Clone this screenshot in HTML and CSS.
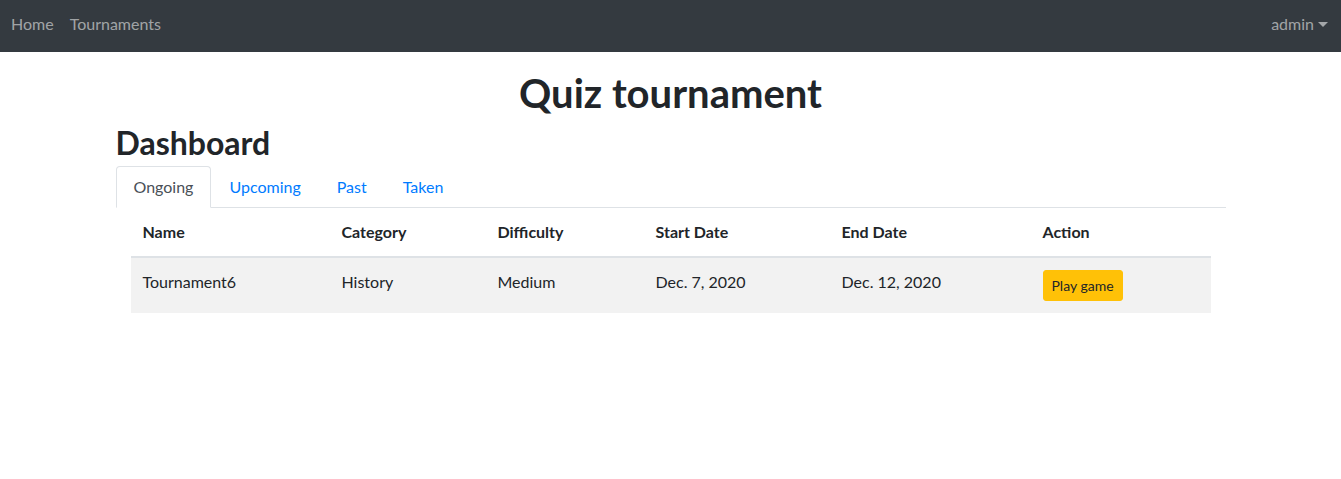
FILE: index.html
```html
<!DOCTYPE html>
<html>
<head>
<meta charset="utf-8">
<link rel="stylesheet" href="styles.css">
</head>
<body>
<nav class="navbar">
  <div class="nav-left">
    <a class="nav-link" href="#">Home</a>
    <a class="nav-link" href="#">Tournaments</a>
  </div>
  <div class="nav-right">
    <a class="nav-link dropdown" href="#">admin<span class="caret"></span></a>
  </div>
</nav>
<main class="container">
  <h1 class="title">Quiz tournament</h1>
  <h2 class="subtitle">Dashboard</h2>
  <ul class="tabs">
    <li><a class="tab active" href="#">Ongoing</a></li>
    <li><a class="tab" href="#">Upcoming</a></li>
    <li><a class="tab" href="#">Past</a></li>
    <li><a class="tab" href="#">Taken</a></li>
  </ul>
  <div class="tab-content">
    <table class="table">
      <thead>
        <tr>
          <th class="c1">Name</th>
          <th class="c2">Category</th>
          <th class="c3">Difficulty</th>
          <th class="c4">Start Date</th>
          <th class="c5">End Date</th>
          <th class="c6">Action</th>
        </tr>
      </thead>
      <tbody>
        <tr class="striped">
          <td>Tournament6</td>
          <td>History</td>
          <td>Medium</td>
          <td>Dec. 7, 2020</td>
          <td>Dec. 12, 2020</td>
          <td><a class="btn" href="#">Play game</a></td>
        </tr>
      </tbody>
    </table>
  </div>
</main>
</body>
</html>
```
FILE: styles.css
```css
* { box-sizing: border-box; }
html, body { margin: 0; padding: 0; }
body {
  font-family: "Segoe UI", Lato, "Noto Sans", sans-serif;
  font-size: 16px;
  line-height: 1.5;
  color: #212529;
  background: #fff;
}
a { text-decoration: none; }

.navbar {
  height: 52px;
  background: #343a40;
  display: flex;
  justify-content: space-between;
  align-items: center;
  padding: 0 5px 4px 3px;
}
.nav-left, .nav-right { display: flex; align-items: center; }
.nav-link {
  color: rgba(255,255,255,.55);
  padding: 8px 8px;
  font-size: 16px;
}
.dropdown { display: flex; align-items: center; }
.caret {
  display: inline-block;
  margin-left: 4px;
  width: 0; height: 0;
  border-top: 5px solid rgba(255,255,255,.55);
  border-left: 5px solid transparent;
  border-right: 5px solid transparent;
}

.container {
  width: 1140px;
  margin: 0 auto;
  padding: 17px 15px 0;
}
.title {
  margin: 0 0 7px;
  font-size: 40px;
  font-weight: 700;
  line-height: 1.2;
  text-align: center;
}
.subtitle {
  margin: 0 0 4px;
  font-size: 32px;
  font-weight: 700;
  line-height: 1.2;
}
.tabs {
  list-style: none;
  margin: 0;
  padding: 0;
  display: flex;
  border-bottom: 1px solid #dee2e6;
}
.tabs li { margin-bottom: -1px; }
.tab {
  display: block;
  padding: 8px 17px;
  border: 1px solid transparent;
  border-top-left-radius: 4px;
  border-top-right-radius: 4px;
  color: #007bff;
}
.tab.active {
  color: #495057;
  background: #fff;
  border-color: #dee2e6 #dee2e6 #fff;
}
.tab-content { padding: 0 15px; }
.table {
  width: 100%;
  border-collapse: collapse;
  color: #212529;
}
.table th, .table td {
  padding: 12px;
  text-align: left;
  vertical-align: top;
  border-top: 1px solid #dee2e6;
}
.table thead th {
  border-top: 0;
  border-bottom: 2px solid #dee2e6;
  font-weight: 700;
  vertical-align: bottom;
}
.table tbody td { border-top: 0; }
.striped { background: rgba(0,0,0,.05); }
.c1 { width: 199px; }
.c2 { width: 156px; }
.c3 { width: 158px; }
.c4 { width: 186px; }
.c5 { width: 201px; }
.c6 { width: 180px; }
.btn {
  display: inline-block;
  padding: 4px 8px;
  font-size: 14px;
  line-height: 1.5;
  border-radius: 3px;
  background: #ffc107;
  border: 1px solid #ffc107;
  color: #212529;
}
```
